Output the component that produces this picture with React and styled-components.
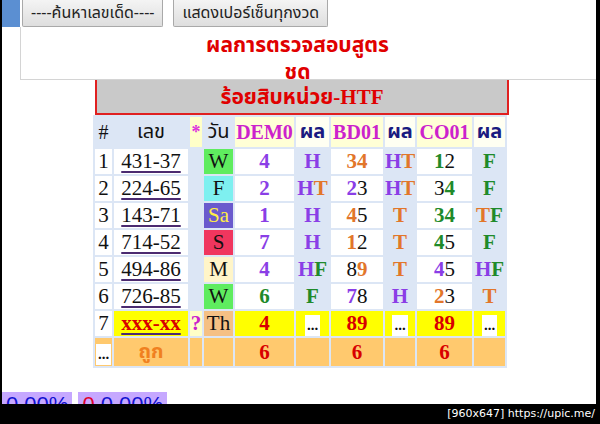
import React from 'react';
import styled, { createGlobalStyle } from 'styled-components';

const GlobalStyle = createGlobalStyle`
  html, body {
    margin: 0;
    padding: 0;
    background: #000;
  }
`;

const COLORS = {
  k: '#111111',
  o: '#e2762a',
  p: '#8a3ee6',
  g: '#1f8a2a',
  r: '#d80000',
};

const THAI = `Tahoma, "Noto Sans Thai", "Noto Sans", "DejaVu Sans", sans-serif`;
const SERIF = `"Liberation Serif", "Noto Serif", Tahoma, "Noto Sans Thai", serif`;

const Frame = styled.div`
  width: 600px;
  height: 424px;
  display: flex;
  flex-direction: column;
  background: #000;
  overflow: hidden;
`;

const Screen = styled.div`
  height: 404px;
  margin-right: 4px;
  border-left: 2px solid #000;
  background: #fff;
  display: flex;
  flex-direction: column;
  overflow: hidden;
`;

const Toolbar = styled.div`
  display: flex;
  align-items: stretch;
  height: 27px;
  gap: 10px;
`;

const BlueTab = styled.div`
  width: 20px;
  margin-left: -2px;
  margin-right: -8px;
  background: #5b8fd2;
`;

const Button = styled.button`
  height: 27px;
  padding: 0 8px;
  border: 1px solid #a9a9a9;
  border-top: none;
  border-radius: 0 0 2px 2px;
  background: linear-gradient(#f4f4f4, #dedede);
  color: #222;
  font-family: ${THAI};
  font-size: 16px;
  line-height: 25px;
`;

const ReportBox = styled.div`
  margin-left: 18px;
  height: 53px;
  box-sizing: border-box;
  padding-top: 5px;
  padding-right: 22px;
  border-left: 1px solid #d4d4d4;
  border-bottom: 1px solid #d4d4d4;
  overflow: hidden;
  text-align: center;
  color: #e00000;
  font-family: ${THAI};
  font-weight: bold;
  font-size: 21px;
  line-height: 27px;
`;

const Main = styled.div`
  padding-left: 91px;
  width: 414px;
`;

const TitleBar = styled.div`
  margin-left: 2px;
  width: 414px;
  height: 35px;
  box-sizing: border-box;
  border: 2px solid #e02020;
  border-top: none;
  background: #c9c9c9;
  color: #e00000;
  text-align: center;
  font-family: ${SERIF};
  font-weight: bold;
  font-size: 21px;
  line-height: 34px;
`;

const Table = styled.table`
  width: 414px;
  table-layout: fixed;
  border-collapse: separate;
  border-spacing: 2px;
  background: #dce6f5;
  font-family: ${SERIF};
`;

const HeadCell = styled.th`
  height: 29px;
  padding: 0;
  background: ${(p) => p.$bg || 'transparent'};
  color: ${(p) => p.$color || '#111'};
  font-family: ${(p) => (p.$thai ? THAI : SERIF)};
  font-size: ${(p) => p.$size || 20}px;
  font-weight: ${(p) => (p.$bold ? 'bold' : 'normal')};
  text-align: center;
  vertical-align: middle;
  white-space: nowrap;
  overflow: hidden;
`;

const Cell = styled.td`
  height: 25px;
  padding: 0;
  background: ${(p) => p.$bg || 'transparent'};
  color: ${(p) => p.$color || '#111'};
  font-size: 21px;
  text-align: center;
  vertical-align: middle;
  white-space: nowrap;
  overflow: hidden;
  line-height: 25px;
`;

const TallCell = styled(Cell)`
  height: 28px;
`;

const NumLink = styled.span`
  text-decoration: underline;
  text-decoration-color: #4b2a70;
  text-underline-offset: 3px;
  color: ${(p) => (p.$hot ? '#d80000' : '#111')};
  font-weight: ${(p) => (p.$hot ? 'bold' : 'normal')};
  font-size: 21px;
`;

const Seg = styled.span`
  color: ${(p) => COLORS[p.$c]};
  font-weight: ${(p) => (p.$c === 'k' ? 'normal' : 'bold')};
`;

const Dots = styled.span`
  display: inline-block;
  background: #fff;
  color: #111;
  font-size: 15px;
  line-height: 21px;
  padding: 0 2px;
  font-weight: bold;
`;

const Mark = styled.span`
  color: #cc22cc;
  font-weight: bold;
`;

const Hit = styled.span`
  color: #f08020;
  font-family: ${THAI};
  font-weight: bold;
  font-size: 20px;
`;

const DayCell = styled(Cell)`
  color: ${(p) => p.$fg || '#111'};
`;

const Spacer = styled.div`
  flex: 1;
`;

const PercentRow = styled.div`
  display: flex;
  gap: 6px;
  height: 12px;
  overflow: visible;
`;

const Percent = styled.div`
  background: #c6a8ff;
  color: #1010d0;
  font-family: "Liberation Sans", Arial, sans-serif;
  font-size: 22px;
  line-height: 26px;
  padding: 0 4px;
  height: 26px;
`;

const Zero = styled.span`
  color: #e0002a;
`;

const Footer = styled.div`
  height: 20px;
  padding-right: 5px;
  text-align: right;
  color: #fff;
  font-family: "DejaVu Sans", sans-serif;
  font-size: 11px;
  line-height: 20px;
`;

const Colored = ({ code }) => {
  const parts = [];
  for (let i = 0; i < code.length; i += 2) {
    parts.push(
      <Seg key={i} $c={code[i]}>
        {code[i + 1]}
      </Seg>
    );
  }
  return <>{parts}</>;
};

const DAYS = {
  W: { bg: '#5fec5f' },
  F: { bg: '#7ef0f0' },
  Sa: { bg: '#6a5acd', fg: '#ffee44' },
  S: { bg: '#f0365e' },
  M: { bg: '#fff5c8' },
  Th: { bg: '#f5c084' },
};

const rows = [
  ['431-37', 'W', 'p4', 'pH', 'o3o4', 'pHoT', 'g1k2', 'gF'],
  ['224-65', 'F', 'p2', 'pHoT', 'p2k3', 'pHoT', 'k3g4', 'gF'],
  ['143-71', 'Sa', 'p1', 'pH', 'o4k5', 'oT', 'g3g4', 'oTgF'],
  ['714-52', 'S', 'p7', 'pH', 'o1k2', 'oT', 'g4k5', 'gF'],
  ['494-86', 'M', 'p4', 'pHgF', 'k8o9', 'oT', 'p4k5', 'pHgF'],
  ['726-85', 'W', 'g6', 'gF', 'p7k8', 'pH', 'o2k3', 'oT'],
];

const WIDTHS = [17, 74, 12, 29, 59, 33, 52, 30, 55, 31];
const HEAD_Y = '#ffffd6';
const HEAD_W = '#fffff2';
const YELLOW = '#ffff00';
const ORANGE = '#ffc96e';

export default function App() {
  return (
    <Frame>
      <GlobalStyle />
      <Screen>
        <Toolbar>
          <BlueTab />
          <Button>----ค้นหาเลขเด็ด----</Button>
          <Button>แสดงเปอร์เซ็นทุกงวด</Button>
        </Toolbar>
        <ReportBox>
          ผลการตรวจสอบสูตร
          <br />
          ชุด
        </ReportBox>
        <Main>
          <TitleBar>ร้อยสิบหน่วย-HTF</TitleBar>
          <Table>
            <colgroup>
              {WIDTHS.map((w, i) => (
                <col key={i} style={{ width: w }} />
              ))}
            </colgroup>
            <thead>
              <tr>
                <HeadCell>#</HeadCell>
                <HeadCell $thai>เลข</HeadCell>
                <HeadCell $bg="#ffffc8" $color="#dd33dd" $bold $size={18}>*</HeadCell>
                <HeadCell $thai>วัน</HeadCell>
                <HeadCell $bg={HEAD_Y} $color="#cc22cc" $bold>DEM0</HeadCell>
                <HeadCell $bg={HEAD_W} $color="#1a1a80" $thai $bold>ผล</HeadCell>
                <HeadCell $bg={HEAD_Y} $color="#cc22cc" $bold>BD01</HeadCell>
                <HeadCell $bg={HEAD_W} $color="#1a1a80" $thai $bold>ผล</HeadCell>
                <HeadCell $bg={HEAD_Y} $color="#cc22cc" $bold>CO01</HeadCell>
                <HeadCell $bg={HEAD_W} $color="#1a1a80" $thai $bold>ผล</HeadCell>
              </tr>
            </thead>
            <tbody>
              {rows.map(([num, day, dem, r1, bd, r2, co, r3], i) => (
                <tr key={num}>
                  <Cell $bg="#fff">{i + 1}</Cell>
                  <Cell $bg="#fff">
                    <NumLink>{num}</NumLink>
                  </Cell>
                  <Cell />
                  <DayCell $bg={DAYS[day].bg} $fg={DAYS[day].fg}>{day}</DayCell>
                  <Cell $bg="#fff"><Colored code={dem} /></Cell>
                  <Cell><Colored code={r1} /></Cell>
                  <Cell $bg="#fff"><Colored code={bd} /></Cell>
                  <Cell><Colored code={r2} /></Cell>
                  <Cell $bg="#fff"><Colored code={co} /></Cell>
                  <Cell><Colored code={r3} /></Cell>
                </tr>
              ))}
              <tr>
                <Cell $bg="#fff">7</Cell>
                <Cell $bg={YELLOW}>
                  <NumLink $hot>xxx-xx</NumLink>
                </Cell>
                <Cell $bg="#ffffc8"><Mark>?</Mark></Cell>
                <DayCell $bg={DAYS.Th.bg}>Th</DayCell>
                <Cell $bg={YELLOW}><Colored code="r4" /></Cell>
                <Cell $bg={YELLOW}><Dots>...</Dots></Cell>
                <Cell $bg={YELLOW}><Colored code="r8r9" /></Cell>
                <Cell $bg={YELLOW}><Dots>...</Dots></Cell>
                <Cell $bg={YELLOW}><Colored code="r8r9" /></Cell>
                <Cell $bg={YELLOW}><Dots>...</Dots></Cell>
              </tr>
              <tr>
                <TallCell $bg={ORANGE}><Dots>...</Dots></TallCell>
                <TallCell $bg={ORANGE}><Hit>ถูก</Hit></TallCell>
                <TallCell $bg={ORANGE} />
                <TallCell $bg={ORANGE} />
                <TallCell $bg={ORANGE}><Colored code="r6" /></TallCell>
                <TallCell $bg={ORANGE} />
                <TallCell $bg={ORANGE}><Colored code="r6" /></TallCell>
                <TallCell $bg={ORANGE} />
                <TallCell $bg={ORANGE}><Colored code="r6" /></TallCell>
                <TallCell $bg={ORANGE} />
              </tr>
            </tbody>
          </Table>
        </Main>
        <Spacer />
        <PercentRow>
          <Percent>0.00%</Percent>
          <Percent>
            <Zero>0</Zero> 0.00%
          </Percent>
        </PercentRow>
      </Screen>
      <Footer>[960x647] https://upic.me/</Footer>
    </Frame>
  );
}
